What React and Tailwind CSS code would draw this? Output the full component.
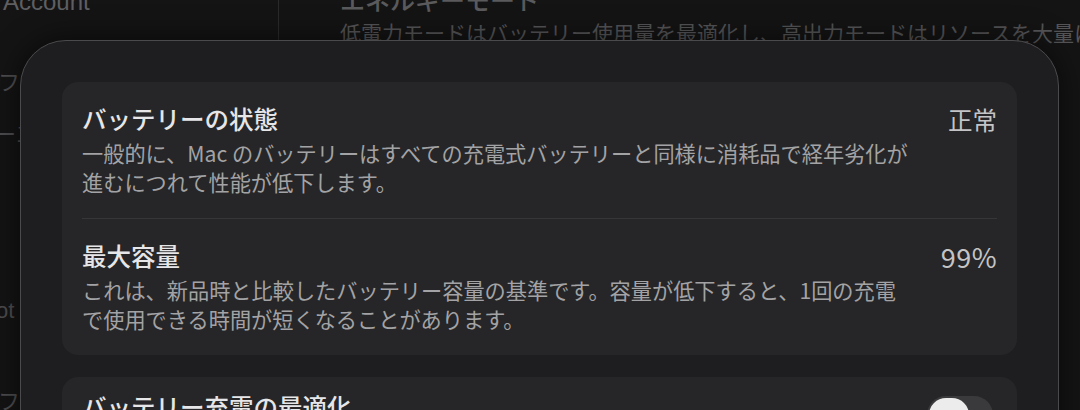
const jp = "font-['Noto_Sans_CJK_JP','Noto_Sans',sans-serif]";

const Row = ({ title, value, lines }) => (
	<div className="flex items-start justify-between px-5 py-[22px]">
		<div className="flex flex-col gap-[4px]">
			<div className="text-[24.5px] leading-[30px] font-medium text-[#e6e6e8]">{title}</div>
			<div className="text-[21.2px] leading-[29px] text-[#a3a3a5]">
				{lines[0]}
				<br />
				{lines[1]}
			</div>
		</div>
		<div className="text-[24.5px] leading-[30px] text-[#c4c4c6] pt-px">{value}</div>
	</div>
);

export default function App() {
	return (
		<div className={`relative w-[1080px] h-[410px] overflow-hidden bg-[#141415] ${jp}`}>
			{/* window behind the sheet */}
			<div className="flex h-full">
				<div className="w-[279px] shrink-0 border-r border-[#2a2a2b] text-[#4d4d4f] text-[22px] leading-[28px]">
					<div className="-mt-[12px] ml-[3px] font-['Liberation_Sans',sans-serif] text-[24px] text-[#5f5f61]">
						Account
					</div>
					<div className="mt-[50px] ml-[-2px] whitespace-nowrap">ファミリー</div>
					<div className="mt-[24px] ml-[-6px] whitespace-nowrap">ー1</div>
					<div className="mt-[151px] ml-[-4px] whitespace-nowrap font-['Liberation_Sans',sans-serif]">ot</div>
					<div className="mt-[60px] ml-[-2px] whitespace-nowrap">フ</div>
				</div>
				<div className="pl-[61px] -mt-[17px] whitespace-nowrap">
					<div className="text-[25px] leading-[32px] font-medium text-[#5a5a5c]">エネルギーモード</div>
					<div className="mt-[3px] text-[21px] leading-[28px] text-[#555557]">
						低電力モードはバッテリー使用量を最適化し、高出力モードはリソースを大量に使用します。
					</div>
				</div>
			</div>

			{/* sheet */}
			<div className="absolute left-[20px] top-[40px] w-[1039px] h-[440px] rounded-[46px] border border-[#4a4a4c] bg-[#1e1e20] px-[41px] pt-[41px] shadow-[0_0_30px_rgba(0,0,0,0.6)]">
				<div className="rounded-[16px] bg-[#262628]">
					<Row
						title="バッテリーの状態"
						value="正常"
						lines={[
							"一般的に、Mac のバッテリーはすべての充電式バッテリーと同様に消耗品で経年劣化が",
							"進むにつれて性能が低下します。",
						]}
					/>
					<div className="mx-5 h-px bg-[#363638]" />
					<Row
						title="最大容量"
						value={<span className="text-[27px] leading-[30px] tracking-[0.5px]">99%</span>}
						lines={[
							"これは、新品時と比較したバッテリー容量の基準です。容量が低下すると、1回の充電",
							"で使用できる時間が短くなることがあります。",
						]}
					/>
				</div>

				<div className="mt-[22px] flex items-start justify-between rounded-[16px] bg-[#262628] px-5 pt-[15px] pb-5">
					<div className="text-[24.5px] leading-[30px] font-medium text-[#e6e6e8]">バッテリー充電の最適化</div>
					<div className="mt-[4px] mr-[4px] flex h-[38px] w-[66px] items-center rounded-full bg-[#3a3a3c] px-[2px]">
						<div className="h-[34px] w-[40px] rounded-full bg-[#ececec]" />
					</div>
				</div>
			</div>
		</div>
	);
}
